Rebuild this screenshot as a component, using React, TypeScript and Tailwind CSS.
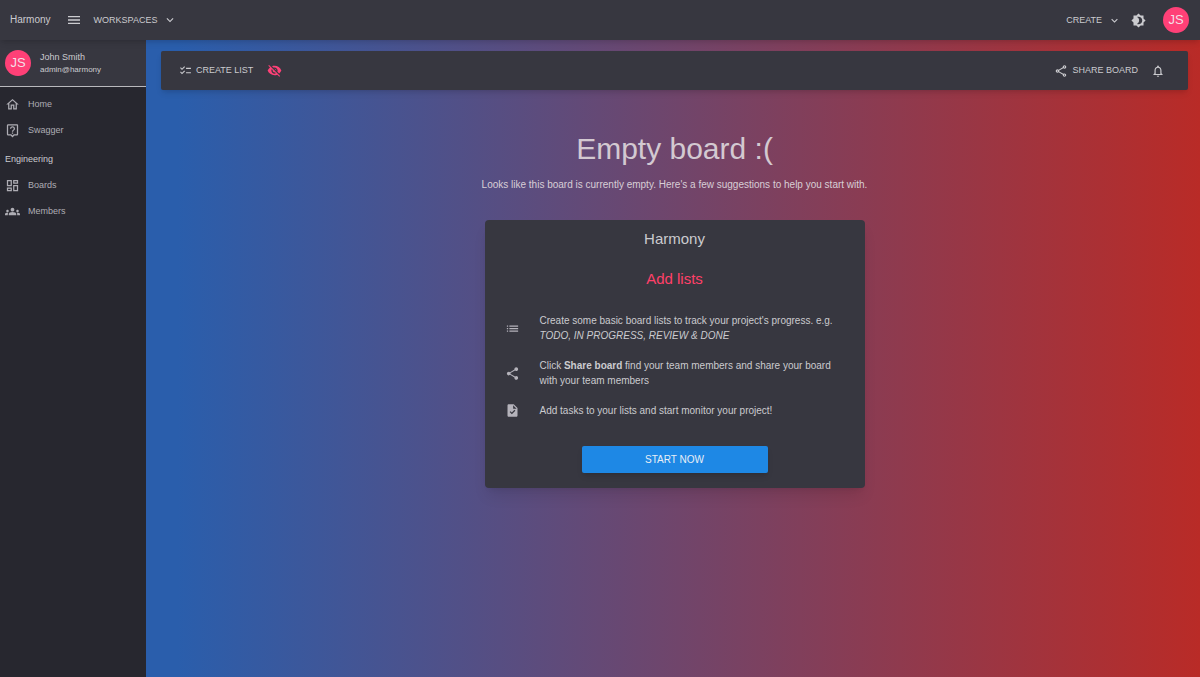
import type { ReactNode } from "react";
import {
  MdBrightness4, MdChecklist, MdExpandMore, MdGroups, MdList, MdMenu, MdOutlineDashboard,
  MdOutlineHome, MdOutlineLiveHelp, MdOutlineNotifications, MdOutlineShare, MdShare, MdTask, MdVisibilityOff,
} from "react-icons/md";

function Avatar() {
  return (
    <span className="flex size-[26px] shrink-0 items-center justify-center rounded-full bg-[#ff4077] text-[13px] text-[#f4dfe6]">
      JS
    </span>
  );
}

function NavItem({ icon, label }: { icon: ReactNode; label: string }) {
  return (
    <a href="#" className="flex h-[26px] items-center gap-2 px-[5px] text-[9px] leading-4 text-[#aeadb4]">
      <span className="flex w-[15px] justify-center">{icon}</span>
      {label}
    </a>
  );
}

function Tip({ icon, children }: { icon: ReactNode; children: ReactNode }) {
  return (
    <li className="flex items-center gap-5">
      <span className="flex w-[15px] shrink-0 justify-center text-[#b5b3bb]">{icon}</span>
      <p>{children}</p>
    </li>
  );
}

export default function App() {
  return (
    <div className="flex min-h-screen flex-col bg-[#27272f] font-['Liberation_Sans',Arial,sans-serif] text-[10px] text-[#cbcbcf]">
      <header className="z-10 flex h-10 items-center bg-[#373740] pr-[11px] pl-[10px] text-[9px] leading-4 shadow-md">
        <span className="text-[10px]">Harmony</span>
        <button aria-label="Toggle menu" className="ml-[15px] flex">
          <MdMenu size={16} />
        </button>
        <button className="ml-3 flex items-center gap-[6px]">
          WORKSPACES <MdExpandMore size={14} />
        </button>
        <button className="ml-auto flex items-center gap-[6px]">
          CREATE <MdExpandMore size={13} />
        </button>
        <button aria-label="Toggle theme" className="mr-[17px] ml-[10px] flex">
          <MdBrightness4 size={15} />
        </button>
        <button aria-label="Account">
          <Avatar />
        </button>
      </header>

      <div className="flex flex-1">
        <aside className="w-[146px] shrink-0 bg-[#27272f]">
          <div className="flex h-[47px] items-center gap-[9px] border-b border-[#b9b9bd] bg-[#373740] pl-[5px]">
            <Avatar />
            <div>
              <div className="text-[9px] leading-[14px]">John Smith</div>
              <div className="text-[8px] leading-3">admin@harmony</div>
            </div>
          </div>
          <nav className="pt-1">
            <NavItem icon={<MdOutlineHome size={15} />} label="Home" />
            <NavItem icon={<MdOutlineLiveHelp size={15} />} label="Swagger" />
            <h2 className="flex h-[29px] items-center px-[5px] pt-1 text-[9px]">Engineering</h2>
            <NavItem icon={<MdOutlineDashboard size={15} />} label="Boards" />
            <NavItem icon={<MdGroups size={15} />} label="Members" />
          </nav>
        </aside>

        <main className="min-w-0 flex-1 bg-linear-to-r/srgb from-[#2a5eac] from-3% to-[#b92b27] pt-[11px] pr-3 pl-[15px]">
          <div className="flex h-[39px] items-center rounded-xs bg-[#373740] pr-[23px] pl-[18px] text-[9px] shadow-md">
            <button className="flex items-center gap-1">
              <MdChecklist size={13} /> CREATE LIST
            </button>
            <button aria-label="Hide board" className="ml-[14px] flex text-[#ff4077]">
              <MdVisibilityOff size={15} />
            </button>
            <button className="ml-auto flex items-center gap-1">
              <MdOutlineShare size={14} /> SHARE BOARD
            </button>
            <button aria-label="Notifications" className="ml-[13px] flex">
              <MdOutlineNotifications size={14} />
            </button>
          </div>

          <h1 className="mt-10 text-center text-[30px] leading-[38px] text-[#d3c9d1]">Empty board :(</h1>
          <p className="mt-[9px] text-center text-[10px] leading-[15px] text-[#d8ced6]">
            Looks like this board is currently empty. Here's a few suggestions to help you start with.
          </p>

          <section className="mx-auto mt-7 w-[380px] max-w-full rounded-[4px] bg-[#373740] px-5 pt-[9px] pb-[15px] shadow-lg">
            <h2 className="text-center text-[15px] leading-5">Harmony</h2>
            <h3 className="mt-5 text-center text-[15px] leading-5 text-[#ff4069]">Add lists</h3>
            <ul className="mt-6 flex flex-col gap-[15px] leading-[15px]">
              <Tip icon={<MdList size={15} />}>
                Create some basic board lists to track your project's progress. e.g.{" "}
                <em>TODO, IN PROGRESS, REVIEW &amp; DONE</em>
              </Tip>
              <Tip icon={<MdShare size={15} />}>
                Click <strong>Share board</strong> find your team members and share your board with your team members
              </Tip>
              <Tip icon={<MdTask size={15} />}>Add tasks to your lists and start monitor your project!</Tip>
            </ul>
            <button className="mx-auto mt-7 block h-[27px] w-[186px] rounded-xs bg-[#1e88e5] text-[10px] text-[#e8eef6] shadow-md">
              START NOW
            </button>
          </section>
        </main>
      </div>
    </div>
  );
}
